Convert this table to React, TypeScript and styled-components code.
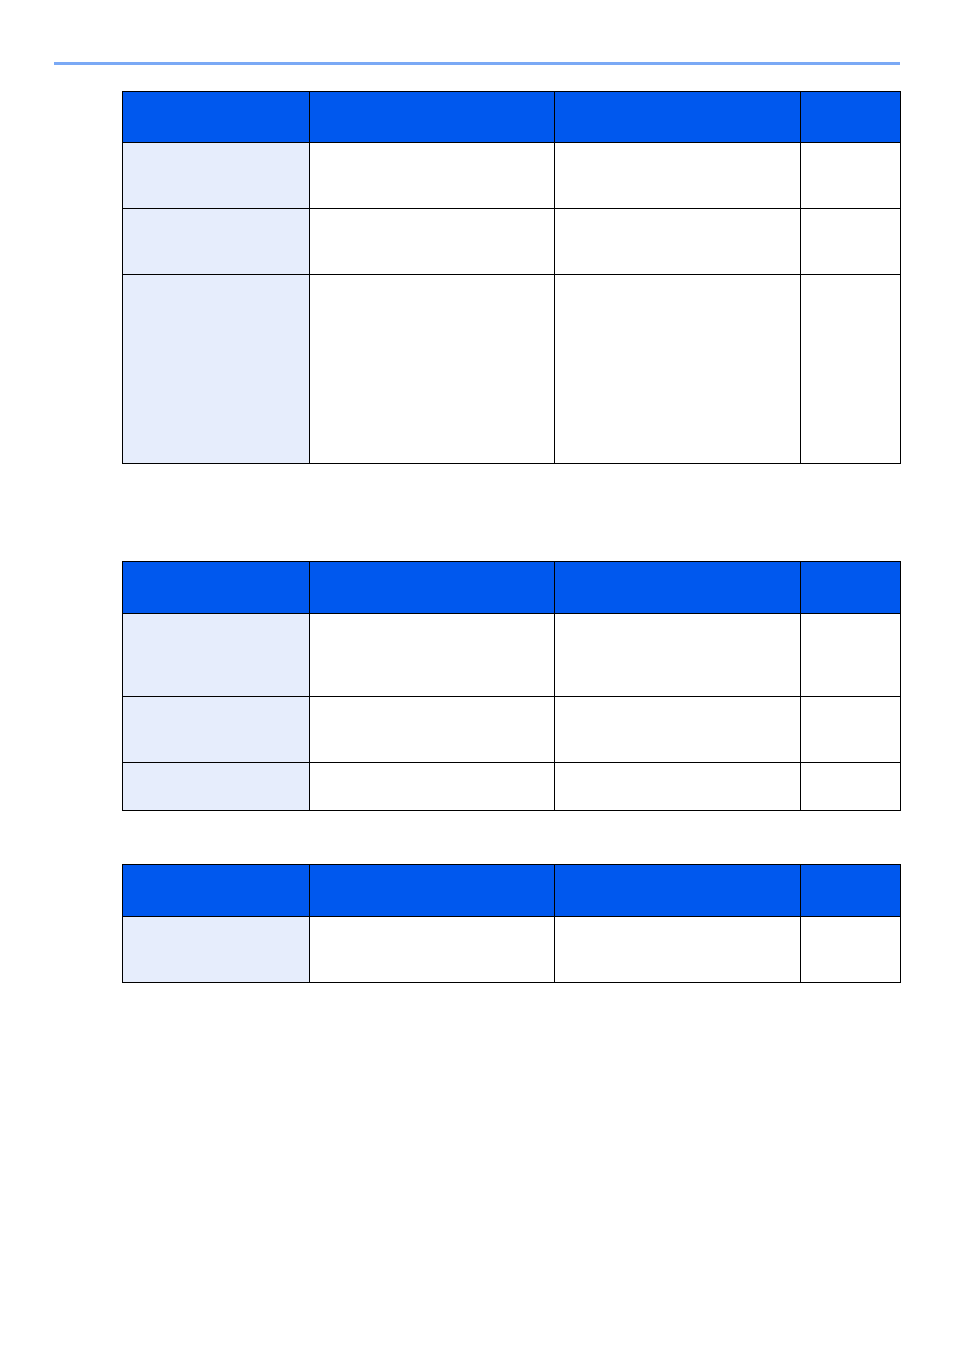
import styled, { createGlobalStyle } from "styled-components";

const GlobalStyle = createGlobalStyle`
  html, body {
    margin: 0;
    padding: 0;
    background: #ffffff;
    font-family: "Liberation Sans", Arial, sans-serif;
  }
`;

const Page = styled.div`
  width: 954px;
  height: 1350px;
  padding-top: 62px;
  box-sizing: border-box;
`;

const TopRule = styled.div`
  margin-left: 54px;
  width: 846px;
  height: 3px;
  background: #7aa9f5;
`;

const Content = styled.div`
  margin-left: 122px;
  display: flex;
  flex-direction: column;
`;

const Table = styled.table<{ $gap: number }>`
  border-collapse: collapse;
  table-layout: fixed;
  width: 778px;
  margin-top: ${(p) => p.$gap}px;
`;

const HeadCell = styled.th<{ $h: number }>`
  background: #0058ee;
  border: 1px solid #000;
  height: ${(p) => p.$h}px;
  padding: 0;
`;

const Cell = styled.td<{ $key?: boolean }>`
  background: ${(p) => (p.$key ? "#e6edfc" : "#ffffff")};
  border: 1px solid #000;
  padding: 0;
`;

const Row = styled.tr<{ $h: number }>`
  height: ${(p) => p.$h}px;
`;

const widths = [187, 245, 246, 100];

function SpecTable({ gap, head, rows }: { gap: number; head: number; rows: number[] }) {
  return (
    <Table $gap={gap}>
      <colgroup>
        {widths.map((w, i) => (
          <col key={i} style={{ width: w }} />
        ))}
      </colgroup>
      <thead>
        <tr>
          {widths.map((_, i) => (
            <HeadCell key={i} $h={head} />
          ))}
        </tr>
      </thead>
      <tbody>
        {rows.map((h, r) => (
          <Row key={r} $h={h}>
            <Cell $key />
            <Cell />
            <Cell />
            <Cell />
          </Row>
        ))}
      </tbody>
    </Table>
  );
}

export default function App() {
  return (
    <Page>
      <GlobalStyle />
      <TopRule />
      <Content>
        <SpecTable gap={26} head={50} rows={[66, 66, 189]} />
        <SpecTable gap={97} head={51} rows={[83, 66, 48]} />
        <SpecTable gap={53} head={51} rows={[66]} />
      </Content>
    </Page>
  );
}
